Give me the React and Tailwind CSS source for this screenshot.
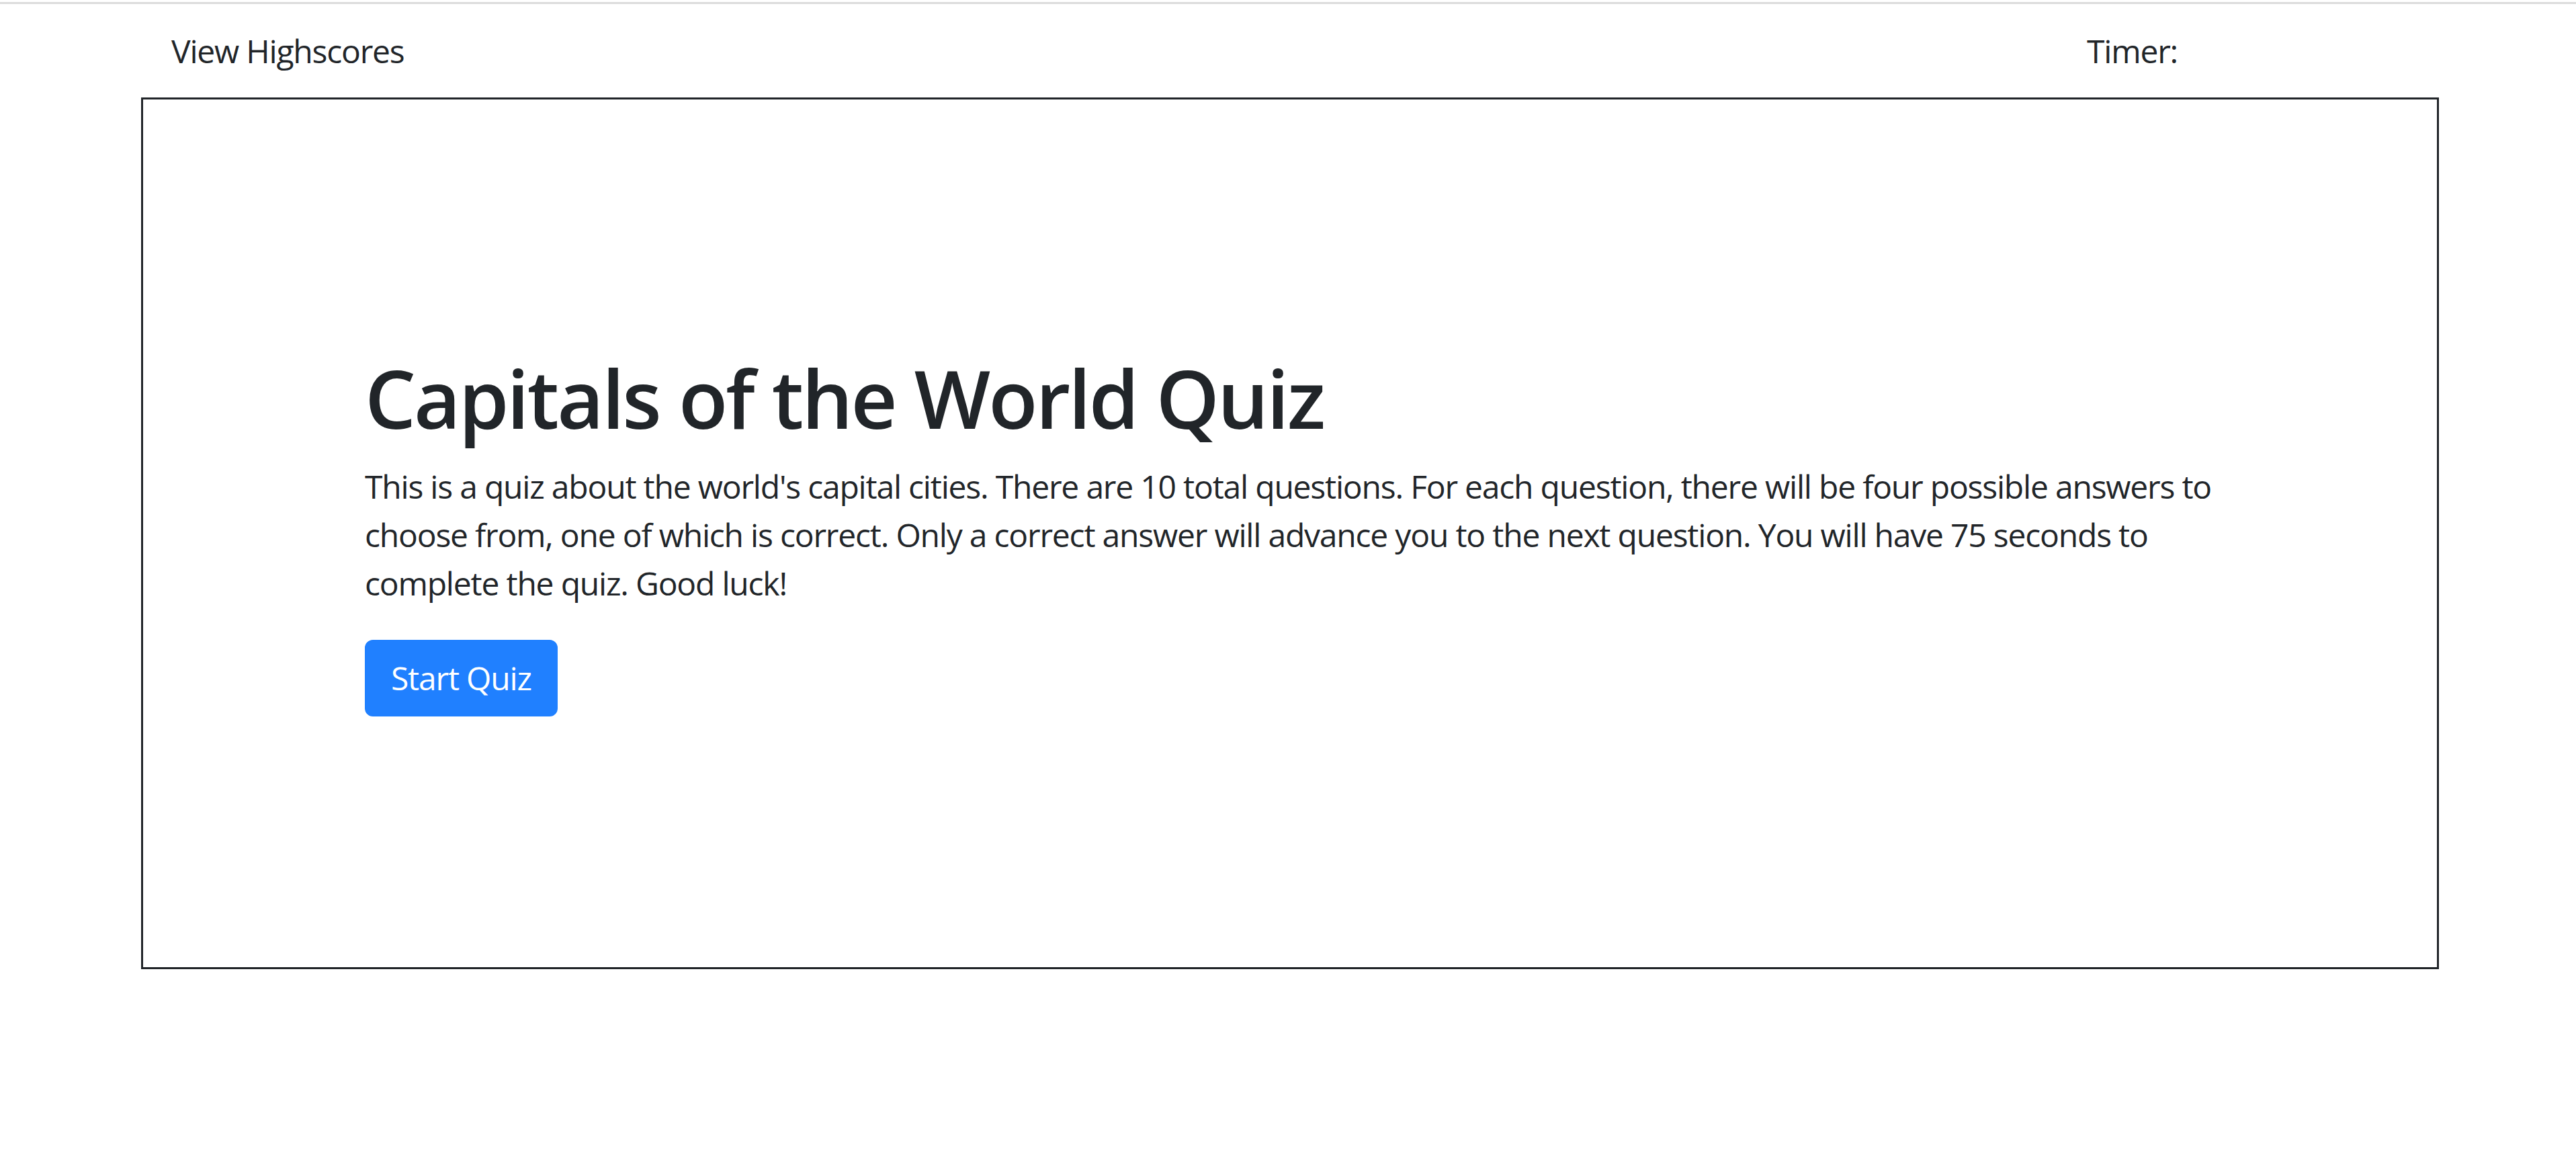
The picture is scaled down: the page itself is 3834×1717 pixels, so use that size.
import React from 'react';

const App = () => {
  return (
    <div className="min-h-screen bg-white font-['Open_Sans',sans-serif] text-[#212529]">
      <div className="h-[3px]" />
      <div className="h-[3px] bg-[#dcdcdc]" />

      {/* Header */}
      <div className="ml-[210px] w-[3420px] px-[45px] pt-[34px] flex justify-between text-[48px] leading-[72px] tracking-[-0.025em]">
        <a href="#" className="text-[#212529]">View Highscores</a>
        <div className="w-[479px]">Timer:</div>
      </div>

      {/* Intro card */}
      <div className="ml-[210px] mt-[33px] w-[3420px] border-[3px] border-[#212529]">
        <div className="px-[330px] pt-[372px] pb-[373px]">
          <h1 className="text-[120px] leading-[144px] font-semibold tracking-[-0.025em] mb-[24px]">Capitals of the World Quiz</h1>
          <p className="text-[48px] leading-[72px] tracking-[-0.025em] mb-[48px]">
            This is a quiz about the world's capital cities. There are 10 total questions. For each question, there will be four possible answers to choose from, one of which is correct. Only a correct answer will advance you to the next question. You will have 75 seconds to complete the quiz. Good luck!
          </p>
          <button className="bg-[#2080ff] text-white text-[48px] leading-[72px] tracking-[-0.025em] px-[36px] py-[18px] border-[3px] border-[#2080ff] rounded-[12px]">
            Start Quiz
          </button>
        </div>
      </div>
    </div>
  );
};

export default App;
